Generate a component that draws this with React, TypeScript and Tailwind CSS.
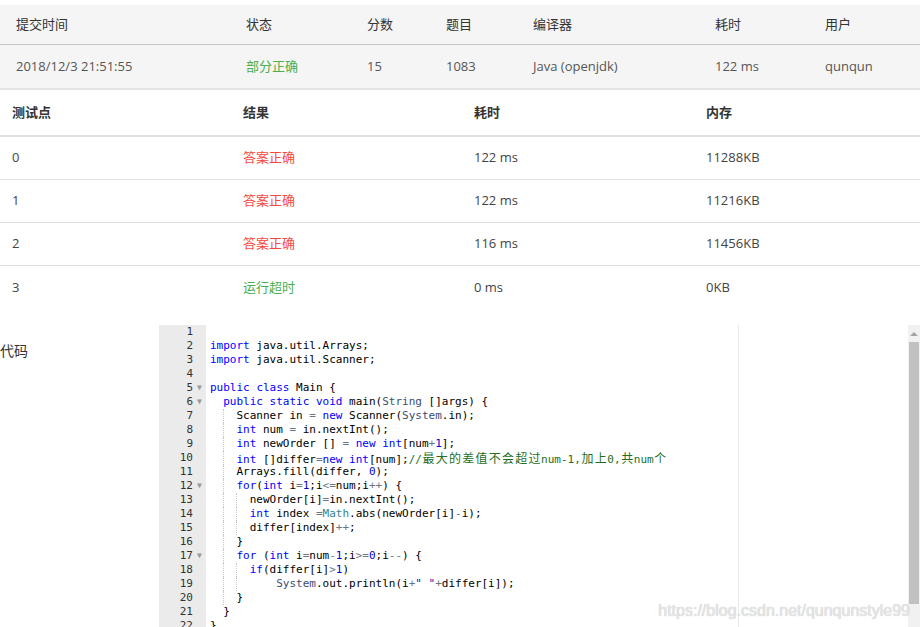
import React from 'react';

type Tok = [string, string?];

const KW = 'text-[#0000ff]';
const OP = 'text-[#687687]';
const NUM = 'text-[#0000cd]';
const SUP = 'text-[#3c4c72]';
const VAR = 'text-[#318495]';
const STR = 'text-[#1a1aa6]';
const CMT = 'text-[#236e24]';

const codeLines: { indent: number; fold?: boolean; toks: Tok[] }[] = [
  { indent: 0, toks: [] },
  { indent: 0, toks: [['import', KW], [' java.util.Arrays;']] },
  { indent: 0, toks: [['import', KW], [' java.util.Scanner;']] },
  { indent: 0, toks: [] },
  { indent: 0, fold: true, toks: [['public', KW], [' '], ['class', KW], [' Main {']] },
  {
    indent: 2,
    fold: true,
    toks: [['public', KW], [' '], ['static', KW], [' '], ['void', KW], [' main('], ['String', SUP], [' []args) {']],
  },
  {
    indent: 4,
    toks: [['Scanner in '], ['=', OP], [' '], ['new', KW], [' Scanner('], ['System', SUP], ['.in);']],
  },
  { indent: 4, toks: [['int', KW], [' num '], ['=', OP], [' in.nextInt();']] },
  {
    indent: 4,
    toks: [['int', KW], [' newOrder [] '], ['=', OP], [' '], ['new', KW], [' '], ['int', KW], ['[num'], ['+', OP], ['1', NUM], ['];']],
  },
  {
    indent: 4,
    toks: [['int', KW], [' []differ'], ['=', OP], ['new', KW], [' '], ['int', KW], ['[num];'], ['//最大的差值不会超过num-1,加上0,共num个', CMT]],
  },
  { indent: 4, toks: [['Arrays.fill(differ, '], ['0', NUM], [');']] },
  {
    indent: 4,
    fold: true,
    toks: [['for', KW], ['('], ['int', KW], [' i'], ['=', OP], ['1', NUM], [';i'], ['<=', OP], ['num;i'], ['++', OP], [') {']],
  },
  { indent: 6, toks: [['newOrder[i]'], ['=', OP], ['in.nextInt();']] },
  { indent: 6, toks: [['int', KW], [' index '], ['=', OP], ['Math', VAR], ['.abs(newOrder[i]'], ['-', OP], ['i);']] },
  { indent: 6, toks: [['differ[index]'], ['++', OP], [';']] },
  { indent: 4, toks: [['}']] },
  {
    indent: 4,
    fold: true,
    toks: [['for', KW], [' ('], ['int', KW], [' i'], ['=', OP], ['num'], ['-', OP], ['1', NUM], [';i'], ['>=', OP], ['0', NUM], [';i'], ['--', OP], [') {']],
  },
  { indent: 6, toks: [['if', KW], ['(differ[i]'], ['>', OP], ['1', NUM], [')']] },
  {
    indent: 10,
    toks: [['System', SUP], ['.out.println(i'], ['+', OP], ['" "', STR], ['+', OP], ['differ[i]);']],
  },
  { indent: 4, toks: [['}']] },
  { indent: 2, toks: [['}']] },
  { indent: 0, toks: [['}']] },
];

// CJK characters take two monospace cells in the editor
function renderText(text: string) {
  const parts: React.ReactNode[] = [];
  let buf = '';
  Array.from(text).forEach((ch, i) => {
    if (/[\u4e00-\u9fff]/.test(ch)) {
      if (buf) parts.push(buf);
      buf = '';
      parts.push(
        <span key={i} className="inline-block w-[13.24px] text-center font-['Noto_Sans_CJK_SC',sans-serif] text-[12px]">
          {ch}
        </span>
      );
    } else {
      buf += ch;
    }
  });
  if (buf) parts.push(buf);
  return parts;
}

function CodeLine({ indent, toks }: { indent: number; toks: Tok[] }) {
  const guides = [];
  for (let c = 0; c < indent; c += 2) {
    const show = c === 2 || c === 4;
    guides.push(
      <span
        key={c}
        className={`inline-block w-[13.24px] h-[14px] align-top ${show ? 'border-l border-dotted border-[#c8c8c8]' : ''}`}
      />
    );
  }
  return (
    <div className="h-[14px] leading-[14px] whitespace-pre">
      {guides}
      {toks.map(([t, cls], i) => (
        <span key={i} className={cls ?? 'text-black'}>
          {renderText(t)}
        </span>
      ))}
    </div>
  );
}

const summaryCols = ['w-[230px]', 'w-[121px]', 'w-[79px]', 'w-[87px]', 'w-[182px]', 'w-[110px]', 'flex-1'];

const tests = [
  { id: '0', result: '答案正确', red: true, time: '122 ms', mem: '11288KB' },
  { id: '1', result: '答案正确', red: true, time: '122 ms', mem: '11216KB' },
  { id: '2', result: '答案正确', red: true, time: '116 ms', mem: '11456KB' },
  { id: '3', result: '运行超时', red: false, time: '0 ms', mem: '0KB' },
];

export default function App() {
  const heads = ['提交时间', '状态', '分数', '题目', '编译器', '耗时', '用户'];
  const values = ['2018/12/3 21:51:55', '部分正确', '15', '1083', 'Java (openjdk)', '122 ms', 'qunqun'];

  return (
    <div className="w-[920px] h-[627px] overflow-hidden bg-white font-['Open_Sans','Noto_Sans_CJK_SC',sans-serif] text-[13px]">
      {/* submission summary */}
      <div className="pt-[5px]">
        <div className="flex h-[40px] items-center pl-4 bg-[#f5f5f5] border-b border-[#c4c4c4] text-[#333]">
          {heads.map((h, i) => (
            <div key={h} className={summaryCols[i]}>
              {h}
            </div>
          ))}
        </div>
        <div className="flex h-[45px] items-center pl-4 bg-[#f5f5f5] border-b-2 border-[#e2e4e6] text-[#555]">
          {values.map((v, i) => (
            <div key={i} className={`${summaryCols[i]} ${i === 1 ? 'text-[#4cae4c]' : ''}`}>
              {v}
            </div>
          ))}
        </div>
      </div>

      {/* test points */}
      <div>
        <div className="flex h-[47px] items-center pl-3 border-b-2 border-[#dde1e5] font-bold text-[#333]">
          <div className="w-[231px]">测试点</div>
          <div className="w-[231px]">结果</div>
          <div className="w-[232px]">耗时</div>
          <div className="flex-1">内存</div>
        </div>
        {tests.map((t, i) => (
          <div
            key={t.id}
            className={`flex h-[43px] items-center pl-3 text-[#444] ${i < tests.length - 1 ? 'border-b border-[#dde1e5]' : ''}`}
          >
            <div className="w-[231px]">{t.id}</div>
            <div className={`w-[231px] ${t.red ? 'text-[#f5493d]' : 'text-[#4cae4c]'}`}>{t.result}</div>
            <div className="w-[232px]">{t.time}</div>
            <div className="flex-1">{t.mem}</div>
          </div>
        ))}
      </div>

      {/* code */}
      <div className="flex mt-[16px]">
        <div className="w-[159px] pt-[15px] text-[14px] text-[#333]">代码</div>
        <div className="relative flex-1 flex font-['DejaVu_Sans_Mono',monospace] text-[11px]">
          <div className="w-[47px] bg-[#ebebeb] text-[#333]">
            {codeLines.map((l, i) => (
              <div key={i} className="h-[14px] leading-[14px] flex justify-end">
                <span>{i + 1}</span>
                <span className="w-[13px] text-center text-[8px] text-[#999]">{l.fold ? '▼' : ''}</span>
              </div>
            ))}
          </div>
          <div className="relative flex-1 pl-[4px]">
            {codeLines.map((l, i) => (
              <CodeLine key={i} indent={l.indent} toks={l.toks} />
            ))}
            <div className="absolute top-0 bottom-0 left-[532px] w-px bg-[#e8e8e8]" />
          </div>
          {/* scrollbar */}
          <div className="absolute right-0 top-0 bottom-0 w-[12px] bg-[#f1f1f1] flex flex-col items-center">
            <div className="h-[17px] flex items-center justify-center">
              <div className="w-0 h-0 border-l-[4px] border-r-[4px] border-b-[4px] border-l-transparent border-r-transparent border-b-[#a3a3a3]" />
            </div>
            <div className="w-[10px] h-[262px] bg-[#c1c1c1]" />
          </div>
          <div className="absolute right-[10px] top-[274px] font-['Liberation_Sans',sans-serif] text-[16px] text-[#e6e6e6] [text-shadow:0_0_1px_#bbb]">
            https://blog.csdn.net/qunqunstyle99
          </div>
        </div>
      </div>
    </div>
  );
}
